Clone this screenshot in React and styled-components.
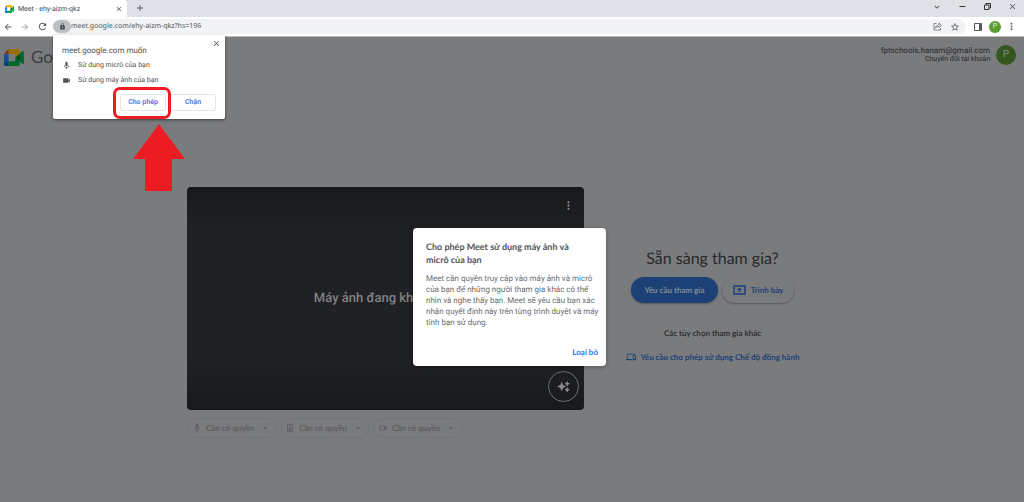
import React from 'react';
import styled, { createGlobalStyle } from 'styled-components';
import {
  MdArrowBack, MdArrowForward, MdRefresh, MdLock, MdMic, MdVideocam, MdClose, MdAdd,
  MdStarBorder, MdMoreVert, MdKeyboardArrowDown, MdArrowDropDown, MdOutlineSpeaker,
  MdDevices, MdOutlineVideocam,
} from 'react-icons/md';

const uiFont = '"Noto Sans", sans-serif';
const brandFont = 'Lato, sans-serif';
const bodyFont = 'Roboto, sans-serif';

const GlobalStyle = createGlobalStyle`
  * { box-sizing: border-box; }
  body { margin: 0; background: #7a7b7d; font-family: ${bodyFont}; text-rendering: geometricPrecision; }
  button, input { text-rendering: inherit; }
  button { margin: 0; padding: 0; border: 0; background: none; font: inherit; color: inherit; cursor: pointer; }
  h1, h2, p, ul { margin: 0; padding: 0; list-style: none; font-weight: 400; }
  svg { display: block; flex: none; }
`;

const Window = styled.div`
  min-height: 100vh;
  display: flex;
  flex-direction: column;
`;

const TabStrip = styled.div`
  height: 17px;
  display: flex;
  align-items: stretch;
  background: #dee1e6;
  color: #45484c;
`;

const Tab = styled.div`
  width: 127px;
  padding: 0 4px 0 5px;
  display: flex;
  align-items: center;
  gap: 4px;
  background: #fff;
  border-radius: 0 4px 0 0;
  font: 7px/10px ${bodyFont};
`;

const TabTitle = styled.span`
  flex: 1;
  white-space: nowrap;
`;

const IconButton = styled.button`
  width: ${(p) => p.$size || 16}px;
  height: ${(p) => p.$size || 16}px;
  display: grid;
  place-items: center;
  color: ${(p) => p.$color || '#55585c'};
`;

const NewTab = styled(IconButton)`
  margin-left: 5px;
`;

const WindowControls = styled.div`
  margin-left: auto;
  padding: 0 4px 0 0;
  display: flex;
  align-items: center;
  gap: 9px;
  height: 13px;
`;

const Toolbar = styled.div`
  position: relative;
  height: 20px;
  padding: 0 3px 0 0;
  display: flex;
  align-items: center;
  background: #fff;
  border-bottom: 1px solid #b9babc;
`;

const NavButtons = styled.div`
  width: 53px;
  display: flex;
  gap: 1px;
`;

const AddressBar = styled.div`
  flex: 1;
  height: 15px;
  display: flex;
  align-items: center;
  padding-right: 3px;
  border-radius: 8px;
  background: #f1f3f4;
`;

const SiteInfo = styled.button`
  width: 18px;
  height: 13px;
  display: grid;
  place-items: center;
  border-radius: 7px;
  background: #bdc0c3;
  color: #4c4f53;
`;

const Address = styled.input`
  flex: 1;
  min-width: 0;
  padding: 0;
  border: 0;
  outline: 0;
  background: none;
  color: #505459;
  font: 7px/12px ${uiFont};
`;

const Avatar = styled.span`
  flex: none;
  width: ${(p) => p.$size}px;
  height: ${(p) => p.$size}px;
  display: grid;
  place-items: center;
  border-radius: 50%;
  background: ${(p) => p.$bg};
  color: ${(p) => p.$color};
  font: ${(p) => p.$font}px/1 ${bodyFont};
`;

const PermissionPopup = styled.section`
  position: absolute;
  z-index: 2;
  top: 18px;
  left: 53px;
  width: 172px;
  height: 84px;
  padding: 8px 9px 8px;
  display: flex;
  flex-direction: column;
  border-radius: 2px;
  background: #fff;
  color: #505357;
  box-shadow: 0 1px 3px rgba(0, 0, 0, 0.5);
  font: 7px/15px ${bodyFont};
`;

const PopupClose = styled(IconButton)`
  position: absolute;
  top: 3px;
  right: 4px;
`;

const PopupTitle = styled.h2`
  font: 8px/15px ${bodyFont};
`;

const Permission = styled.li`
  display: flex;
  align-items: center;
  gap: 7px;
`;

const PopupActions = styled.div`
  margin-top: auto;
  display: flex;
  justify-content: flex-end;
  gap: 4px;
`;

const PopupButton = styled.button`
  width: 46px;
  height: 17px;
  border: 1px solid #e3e5e8;
  border-radius: 2px;
  color: #3b7ae8;
  font: 600 7px/15px ${bodyFont};
`;

const Highlight = styled.span`
  position: absolute;
  left: 60px;
  top: 52px;
  width: 58px;
  height: 32px;
  border: 3px solid #ec1c24;
  border-radius: 7px;
  pointer-events: none;
`;

const Arrow = styled.svg`
  position: absolute;
  left: 79px;
  top: 89px;
`;

const Page = styled.div`
  flex: 1;
  display: flex;
  flex-direction: column;
  background: #7a7b7d;
`;

const Header = styled.header`
  height: 150px;
  padding: 8px 8px 0 4px;
  display: flex;
  justify-content: space-between;
  align-items: flex-start;
`;

const Brand = styled.div`
  display: flex;
  align-items: center;
  gap: 7px;
  height: 24px;
  color: #3b3d40;
  font: 17px/24px ${brandFont};
`;

const Account = styled.div`
  display: flex;
  align-items: center;
  gap: 6px;
  text-align: right;
  color: #27282a;
  font: 8px/9px ${bodyFont};
`;

const AccountLine = styled.div`
  font-size: ${(p) => p.$size}px;
`;

const Main = styled.main`
  display: grid;
  grid-template-columns: 397fr 241fr;
  column-gap: 8px;
  padding: 0 191px 0 187px;
`;

const Video = styled.section`
  position: relative;
  aspect-ratio: 397 / 223;
  display: flex;
  align-items: center;
  justify-content: center;
  border-radius: 4px;
  background: linear-gradient(#18191a, #202124 20%, #202124 75%, #18191a);
  color: #808183;
`;

const CameraNotice = styled.p`
  font: 500 13px/19px ${bodyFont};
`;

const VideoMenu = styled(IconButton)`
  position: absolute;
  top: 10px;
  right: 8px;
`;

const Effects = styled(IconButton)`
  position: absolute;
  right: 5px;
  bottom: 8px;
  border: 1px solid #6b6c6e;
  border-radius: 50%;
`;

const Dialog = styled.section`
  position: absolute;
  z-index: 1;
  left: 226px;
  top: 41px;
  width: 193px;
  height: 138px;
  padding: 12px 8px 8px 13px;
  display: flex;
  flex-direction: column;
  border-radius: 4px;
  background: #fff;
  white-space: nowrap;
  box-shadow: 0 1px 4px rgba(0, 0, 0, 0.3);
`;

const DialogTitle = styled.h2`
  color: #505458;
  font: 700 9px/13px ${brandFont};
`;

const DialogText = styled.p`
  margin-top: 7px;
  color: #6a6d72;
  font: 8px/11px ${bodyFont};
`;

const Line = styled.span`
  display: block;
`;

const DialogAction = styled.button`
  margin-top: auto;
  align-self: flex-end;
  color: #2b7bea;
  font: 700 8px/12px ${brandFont};
`;

const Devices = styled.div`
  display: flex;
  gap: 3px;
  margin-top: 8px;
`;

const Device = styled.button`
  width: 90px;
  height: 20px;
  padding: 0 6px 0 4px;
  display: flex;
  align-items: center;
  gap: 4px;
  border: 1px solid #737476;
  border-radius: 10px;
  color: #5d5e60;
  white-space: nowrap;
  font: 700 8px/12px ${brandFont};
`;

const DeviceLabel = styled.span`
  flex: 1;
  text-align: left;
`;

const Join = styled.section`
  display: flex;
  flex-direction: column;
  align-items: center;
  padding-top: 61px;
  white-space: nowrap;
`;

const JoinTitle = styled.h1`
  color: #27282a;
  font: 16px/22px ${brandFont};
`;

const JoinActions = styled.div`
  display: flex;
  gap: 4px;
  margin-top: 7px;
`;

const PillButton = styled.button`
  width: ${(p) => (p.$primary ? 87 : 72)}px;
  height: 26px;
  display: flex;
  align-items: center;
  justify-content: center;
  gap: 5px;
  border-radius: 13px;
  background: ${(p) => (p.$primary ? '#1c4177' : '#7a7b7d')};
  color: ${(p) => (p.$primary ? '#858a92' : '#1c4177')};
  box-shadow: 0 1px 2px rgba(0, 0, 0, 0.3);
  font: 700 8px/12px ${brandFont};
`;

const OptionsLabel = styled.p`
  margin-top: 24px;
  color: #303133;
  font: 700 8px/12px ${brandFont};
`;

const Companion = styled.a`
  margin-top: 12px;
  display: flex;
  align-items: center;
  gap: 5px;
  color: #1c4177;
  text-decoration: none;
  font: 700 8px/12px ${brandFont};
`;

const LogoSvg = styled.svg`
  filter: brightness(${(p) => (p.$dim ? 0.6 : 1)});
`;

const MeetLogo = ({ width, height, dim }) => (
  <LogoSvg $dim={dim} width={width} height={height} viewBox="0 0 88 72" preserveAspectRatio="none" aria-hidden="true">
    <path fill="#00832d" d="M49.500 36l8.500 9.700 11.500 7.300 2-17-2-16.600-11.700 6.400z" />
    <path fill="#0066da" d="M0 51.500V66c0 3.300 2.700 6 6 6h14.500V51.500z" />
    <path fill="#e94235" d="M20.500 0L0 20.500h20.500z" />
    <path fill="#2684fc" d="M0 20.500h20.500v31H0z" />
    <path fill="#00ac47" d="M82.600 8.700L69.500 19.400v33.700l13.200 10.800c2 1.500 4.800.1 4.800-2.400V11c0-2.500-2.900-3.900-4.900-2.300z" />
    <path fill="#00ac47" d="M49.500 36v15.500h-29V72h43c3.300 0 6-2.700 6-6V53.100z" />
    <path fill="#ffba00" d="M63.500 0h-43v20.500h29V36l20-16.600V6c0-3.300-2.700-6-6-6z" />
  </LogoSvg>
);

const RestoreIcon = () => (
  <svg width="7" height="7" viewBox="0 0 14 14" fill="none" stroke="#2f3133" strokeWidth="2">
    <path d="M1 4h9v9H1zM4 4V1h9v9h-3" />
  </svg>
);

const MinimizeIcon = () => (
  <svg width="7" height="7" viewBox="0 0 14 14" stroke="#3a3c3f" strokeWidth="2"><path d="M1 7h12" /></svg>
);

const ShareIcon = () => (
  <svg width="9" height="9" viewBox="0 0 18 18" fill="none" stroke="#6b6e72" strokeWidth="1.600">
    <path d="M7 3H2v13h13v-4M5 12c0-4 3-6 7-6V2l5 5-5 4V9c-3 0-5 1-7 3z" />
  </svg>
);

const PanelIcon = () => (
  <svg width="8" height="8" viewBox="0 0 16 16">
    <path d="M1 1h14v14H1z" fill="none" stroke="#55585c" strokeWidth="2" />
    <path d="M10 1h5v14h-5z" fill="#55585c" />
  </svg>
);

const PresentIcon = () => (
  <svg width="13" height="10" viewBox="0 0 26 20">
    <path d="M2 2h22v16H2z" fill="none" stroke="#1c4177" strokeWidth="3" />
    <path d="M13 5l5 5h-3.500v4h-3v-4H8z" fill="#1c4177" />
  </svg>
);

const SparkleIcon = () => (
  <svg width="13" height="13" viewBox="0 0 28 28" fill="#8a8b8d">
    <path d="M10 4l3 7 7 3-7 3-3 7-3-7-7-3 7-3z" />
    <path d="M22 2l2 4 4 2-4 2-2 4-2-4-4-2 4-2zM22 15l2 4 4 2-4 2-2 4-2-4-4-2 4-2z" />
  </svg>
);

const devices = [MdMic, MdOutlineSpeaker, MdOutlineVideocam];

const dialogLines = [
  'Meet cần quyền truy cập vào máy ảnh và micrô',
  'của bạn để những người tham gia khác có thể',
  'nhìn và nghe thấy bạn. Meet sẽ yêu cầu bạn xác',
  'nhận quyết định này trên từng trình duyệt và máy',
  'tính bạn sử dụng.',
];

export default function App() {
  return (
    <Window>
      <GlobalStyle />
      <TabStrip>
        <Tab>
          <MeetLogo width={9} height={8} />
          <TabTitle>Meet - ehy-aizm-qkz</TabTitle>
          <IconButton $size={8} aria-label="Close tab"><MdClose size={8} /></IconButton>
        </Tab>
        <NewTab aria-label="New tab"><MdAdd size={10} /></NewTab>
        <WindowControls>
          <IconButton aria-label="Search tabs"><MdKeyboardArrowDown size={10} /></IconButton>
          <IconButton aria-label="Minimize"><MinimizeIcon /></IconButton>
          <IconButton aria-label="Restore"><RestoreIcon /></IconButton>
          <IconButton aria-label="Close"><MdClose size={9} /></IconButton>
        </WindowControls>
      </TabStrip>
      <Toolbar>
        <NavButtons>
          <IconButton aria-label="Back"><MdArrowBack size={10} /></IconButton>
          <IconButton $color="#a9abad" aria-label="Forward"><MdArrowForward size={10} /></IconButton>
          <IconButton aria-label="Reload"><MdRefresh size={11} /></IconButton>
        </NavButtons>
        <AddressBar>
          <SiteInfo aria-label="Site information"><MdLock size={7} /></SiteInfo>
          <Address aria-label="Address" defaultValue="meet.google.com/ehy-aizm-qkz?hs=196" />
          <IconButton $size={17} aria-label="Share"><ShareIcon /></IconButton>
          <IconButton $size={17} aria-label="Bookmark"><MdStarBorder size={10} /></IconButton>
        </AddressBar>
        <IconButton $size={23} aria-label="Side panel"><PanelIcon /></IconButton>
        <Avatar $size={12} $bg="#5b9e32" $color="#e6f1df" $font={7}>P</Avatar>
        <IconButton $size={20} aria-label="Menu"><MdMoreVert size={11} /></IconButton>
        <PermissionPopup>
          <PopupTitle>meet.google.com muốn</PopupTitle>
          <PopupClose $size={10} aria-label="Close"><MdClose size={9} /></PopupClose>
          <ul>
            <Permission><MdMic size={9} />Sử dụng micrô của bạn</Permission>
            <Permission><MdVideocam size={9} />Sử dụng máy ảnh của bạn</Permission>
          </ul>
          <PopupActions>
            <PopupButton>Cho phép</PopupButton>
            <PopupButton>Chặn</PopupButton>
          </PopupActions>
          <Highlight />
          <Arrow width="53" height="67" viewBox="0 0 53 67"><path d="M27 0L53 35H40V67H13V35H1z" fill="#ec1c24" /></Arrow>
        </PermissionPopup>
      </Toolbar>
      <Page>
        <Header>
          <Brand><MeetLogo width={20} height={17} dim />Goo</Brand>
          <Account>
            <div>
              <AccountLine $size={8}>fptschools.hanam@gmail.com</AccountLine>
              <AccountLine $size={7}>Chuyển đổi tài khoản</AccountLine>
            </div>
            <Avatar $size={20} $bg="#34561f" $color="#84917d" $font={10}>P</Avatar>
          </Account>
        </Header>
        <Main>
          <div>
            <Video>
              <CameraNotice>Máy ảnh đang không bật</CameraNotice>
              <VideoMenu $color="#8a8b8d" aria-label="Options"><MdMoreVert size={13} /></VideoMenu>
              <Effects $size={31} $color="#8a8b8d" aria-label="Effects"><SparkleIcon /></Effects>
              <Dialog role="dialog">
                <DialogTitle>
                  <Line>Cho phép Meet sử dụng máy ảnh và</Line>
                  <Line>micrô của bạn</Line>
                </DialogTitle>
                <DialogText>{dialogLines.map((l) => <Line key={l}>{l}</Line>)}</DialogText>
                <DialogAction>Loại bỏ</DialogAction>
              </Dialog>
            </Video>
            <Devices>
              {devices.map((Icon, i) => (
                <Device key={i}>
                  <Icon size={10} />
                  <DeviceLabel>Cần có quyền</DeviceLabel>
                  <MdArrowDropDown size={10} />
                </Device>
              ))}
            </Devices>
          </div>
          <Join>
            <JoinTitle>Sẵn sàng tham gia?</JoinTitle>
            <JoinActions>
              <PillButton $primary>Yêu cầu tham gia</PillButton>
              <PillButton><PresentIcon />Trình bày</PillButton>
            </JoinActions>
            <OptionsLabel>Các tùy chọn tham gia khác</OptionsLabel>
            <Companion href="#companion"><MdDevices size={10} />Yêu cầu cho phép sử dụng Chế độ đồng hành</Companion>
          </Join>
        </Main>
      </Page>
    </Window>
  );
}
